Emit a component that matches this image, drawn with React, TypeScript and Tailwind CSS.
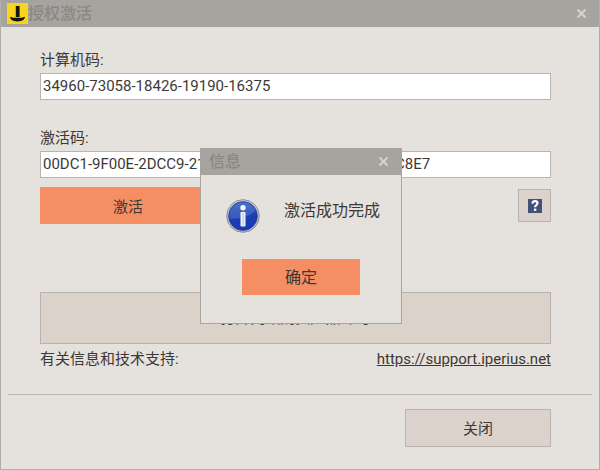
import { useState } from "react";

function AppLogo() {
  return (
    <svg className="w-[21px] h-[21px] shrink-0" viewBox="0 0 21 21" aria-hidden="true">
      <rect width="21" height="21" fill="#f7d51d" />
      <path d="M8.800 3h3.800v11H8.800z" fill="#17130a" />
      <path
        d="M3 13.800c1.200 0 2 1 3.300 1h8.400c1.300 0 2.100-1 3.300-1-.3 3-3 4.600-7.500 4.600S3.300 16.800 3 13.800z"
        fill="#17130a"
      />
    </svg>
  );
}

function InfoIcon() {
  return (
    <svg className="w-[34px] h-[34px] shrink-0" viewBox="0 0 34 34" aria-hidden="true">
      <defs>
        <linearGradient id="ball" x1="0" y1="0" x2="0" y2="1">
          <stop offset="0" stopColor="#3a60c0" />
          <stop offset="0.5" stopColor="#1c3fae" />
          <stop offset="1" stopColor="#1a38bc" />
        </linearGradient>
        <linearGradient id="rim" x1="0" y1="0" x2="0" y2="1">
          <stop offset="0" stopColor="#d5d9de" />
          <stop offset="1" stopColor="#b4b9c2" />
        </linearGradient>
      </defs>
      <circle cx="17" cy="17" r="16.300" fill="url(#rim)" stroke="#7d8490" strokeWidth="0.900" />
      <circle cx="17" cy="17" r="14.400" fill="url(#ball)" stroke="#203c8c" strokeWidth="0.700" />
      <path
        d="M3.500 19.500A13.700 13.700 0 0 1 17 3.300c5.500 0 10.200 3.200 12.300 7.900C24 17.500 14 20.500 3.500 19.500z"
        fill="#6f92dc"
        opacity="0.350"
      />
      <circle cx="17" cy="8.700" r="2.700" fill="#f1f4fb" />
      <rect x="14.500" y="13" width="5" height="14.500" rx="0.800" fill="#eef1f9" />
      <rect x="16.500" y="14" width="1.500" height="12.500" fill="#c9d0e2" />
    </svg>
  );
}

function CloseIcon() {
  return (
    <svg className="w-[11px] h-[11px]" viewBox="0 0 11 11" aria-hidden="true">
      <path d="M1.500 1.500l8 8M9.500 1.500l-8 8" stroke="#d6d3ce" strokeWidth="2" />
    </svg>
  );
}

function HelpIcon() {
  return (
    <svg className="w-[14px] h-[14px]" viewBox="0 0 14 14" aria-hidden="true">
      <rect width="14" height="14" fill="#43507c" />
      <path
        d="M4.500 4.600c.1-1.600 1-2.400 2.500-2.400s2.500.8 2.500 2.100c0 1.700-2.300 1.700-2.400 4"
        fill="none"
        stroke="#fff"
        strokeWidth="2.200"
      />
      <rect x="5.900" y="9.600" width="2.400" height="2.300" fill="#fff" />
    </svg>
  );
}

const inputClass =
  "block w-full h-[27px] px-[2px] pb-[2px] bg-white border border-[#b5b5b1] text-[#3c3a38] outline-none";

export default function App() {
  const [showInfo, setShowInfo] = useState(true);

  return (
    <div className="relative min-h-screen flex flex-col bg-[#e5e2dd] border border-t-0 border-[#b0aea9] text-[15px] leading-5 text-[#3c3835] font-['Roboto','Noto_Sans_CJK_SC',sans-serif]">
      <header className="flex items-center h-[27px] pl-[6px] pr-3 bg-[#a7a39e]">
        <AppLogo />
        <h1 className="flex-1 text-[16px] font-medium text-[#8b8883]">授权激活</h1>
        <button type="button" aria-label="关闭窗口">
          <CloseIcon />
        </button>
      </header>

      <main className="flex-1 flex flex-col pl-[39px] pr-12 pt-[23px]">
        <label htmlFor="machine" className="mb-[3px]">
          计算机码:
        </label>
        <input
          id="machine"
          className={inputClass}
          readOnly
          defaultValue="34960-73058-18426-19190-16375"
        />

        <label htmlFor="code" className="mt-7 mb-[3px]">
          激活码:
        </label>
        <input
          id="code"
          className={inputClass}
          defaultValue="00DC1-9F00E-2DCC9-21D0D-00000-0D000-00000-00C8E7"
        />

        <div className="flex items-center justify-between mt-[9px]">
          <button type="button" className="w-44 h-[37px] pt-[2px] bg-[#f58e63]">
            激活
          </button>
          <button
            type="button"
            aria-label="帮助"
            className="flex items-center justify-center w-[33px] h-[33px] bg-[#dbd3cb] border border-[#b8b2ac]"
          >
            <HelpIcon />
          </button>
        </div>

        <button
          type="button"
          className="h-[52px] mt-[68px] bg-[#dbd3ca] border border-[#b8b2ac]"
        >
          打开网站购买产品许可
        </button>
        <div className="flex justify-between mt-[5px]">
          <span>有关信息和技术支持:</span>
          <a href="https://support.iperius.net" className="underline">
            https://support.iperius.net
          </a>
        </div>
      </main>

      <footer className="flex justify-end mx-[7px] pt-[14px] pb-[22px] pr-[41px] border-t border-[#b9b6b2]">
        <button
          type="button"
          className="w-[146px] h-[38px] pt-[2px] bg-[#dbd3cb] border border-[#b8b2ac]"
        >
          关闭
        </button>
      </footer>

      {showInfo && (
        <div className="absolute inset-0 flex items-center justify-center pl-[2px] pt-[2px]">
          <div
            role="dialog"
            aria-labelledby="info-title"
            className="w-[202px] bg-[#e5e2dd] border border-[#a8a5a0]"
          >
            <div className="flex items-center justify-between h-[26px] pl-2 pr-3 bg-[#a7a39e]">
              <h2 id="info-title" className="text-[16px] font-medium text-[#8b8883]">
                信息
              </h2>
              <button type="button" aria-label="关闭" onClick={() => setShowInfo(false)}>
                <CloseIcon />
              </button>
            </div>
            <div className="flex items-start gap-6 pl-[25px] pt-6">
              <InfoIcon />
              <p className="text-[16px] pt-[2px]">激活成功完成</p>
            </div>
            <div className="flex justify-center pt-[26px] pb-7">
              <button
                type="button"
                className="w-[118px] h-9 pt-[2px] text-[16px] bg-[#f58e63]"
                onClick={() => setShowInfo(false)}
              >
                确定
              </button>
            </div>
          </div>
        </div>
      )}
    </div>
  );
}
